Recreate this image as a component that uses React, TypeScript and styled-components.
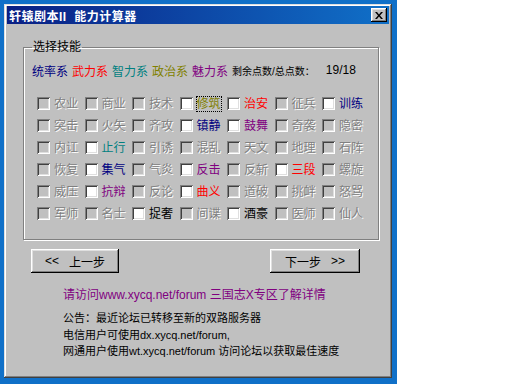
import React from "react";
import styled, { createGlobalStyle } from "styled-components";

const GlobalStyle = createGlobalStyle`
  body {
    margin: 0;
    background: #ffffff;
  }
`;

const FONT = `"Liberation Sans", "Noto Sans CJK SC", sans-serif`;

const Desktop = styled.div`
  width: 397px;
  height: 384px;
  box-sizing: border-box;
  padding: 4px 5px 6px 4px;
  background: #1070c8;
  font-family: ${FONT};
`;

const Window = styled.div`
  height: 100%;
  box-sizing: border-box;
  padding: 2px 3px 3px 3px;
  background: #c0c0c0;
  box-shadow: inset -1px -1px #404040, inset 1px 1px #dfdfdf,
    inset -2px -2px #808080, inset 2px 2px #ffffff;
  display: flex;
  flex-direction: column;
`;

const TitleBar = styled.div`
  height: 18px;
  display: flex;
  align-items: center;
  justify-content: space-between;
  padding: 0 2px;
  background: linear-gradient(to right, #0a1f84, #1070c8);
`;

const Title = styled.span`
  color: #ffffff;
  font-size: 12px;
  font-weight: bold;
  letter-spacing: 0.5px;
  white-space: pre;
`;

const CloseButton = styled.div`
  width: 16px;
  height: 14px;
  box-sizing: border-box;
  background: #c0c0c0;
  box-shadow: inset -1px -1px #000000, inset 1px 1px #ffffff,
    inset -2px -2px #808080, inset 2px 2px #dfdfdf;
  display: flex;
  align-items: center;
  justify-content: center;
`;

const Client = styled.div`
  flex: 1;
  padding: 16px 0 0 16px;
`;

const Group = styled.fieldset`
  width: 350px;
  height: 200px;
  box-sizing: border-box;
  margin: 0;
  padding: 8px 8px 0 8px;
  border: 1px solid #808080;
  box-shadow: inset 1px 1px #ffffff, 1px 1px #ffffff;
`;

const Legend = styled.legend`
  padding: 0 1px;
  font-size: 12px;
  line-height: 14px;
  color: #000000;
`;

const CategoryRow = styled.div`
  display: flex;
  align-items: center;
  gap: 4px;
  height: 16px;
  font-size: 12px;
`;

const Category = styled.span<{ $color: string }>`
  width: 36px;
  color: ${(p) => p.$color};
  white-space: nowrap;
`;

const Points = styled.span`
  font-size: 10px;
  color: #000000;
  white-space: nowrap;
`;

const PointsValue = styled.span`
  margin-left: 7px;
  font-size: 12px;
  color: #000000;
`;

const SkillGrid = styled.div`
  display: grid;
  grid-template-columns: repeat(7, 47.5px);
  grid-auto-rows: 22px;
  margin: 19px 0 0 5px;
`;

const Skill = styled.div`
  display: flex;
  align-items: center;
  gap: 4px;
  height: 13px;
`;

const Box = styled.span<{ $enabled: boolean }>`
  width: 13px;
  height: 13px;
  box-sizing: border-box;
  flex: none;
  background: ${(p) => (p.$enabled ? "#ffffff" : "#c0c0c0")};
  box-shadow: inset 1px 1px #808080, inset -1px -1px #ffffff,
    inset 2px 2px #404040, inset -2px -2px #dfdfdf;
`;

const SkillLabel = styled.span<{ $color?: string; $focus?: boolean }>`
  font-size: 12px;
  line-height: 14px;
  white-space: nowrap;
  color: ${(p) => p.$color ?? "#808080"};
  text-shadow: ${(p) => (p.$color ? "none" : "1px 1px 0 #ffffff")};
  outline: ${(p) => (p.$focus ? "1px dotted #000000" : "none")};
  outline-offset: 0;
`;

const ButtonRow = styled.div`
  display: flex;
  justify-content: space-between;
  margin: 9px 29px 0 8px;
`;

const Button = styled.div<{ $width: number }>`
  width: ${(p) => p.$width}px;
  height: 24px;
  box-sizing: border-box;
  display: flex;
  align-items: center;
  justify-content: center;
  gap: 10px;
  font-size: 12px;
  color: #000000;
  background: #c0c0c0;
  box-shadow: inset -1px -1px #000000, inset 1px 1px #ffffff,
    inset -2px -2px #808080, inset 2px 2px #dfdfdf;
`;

const LinkLine = styled.div`
  margin: 15px 0 0 40px;
  font-size: 12px;
  line-height: 14px;
  color: #800080;
  white-space: nowrap;
`;

const Notice = styled.div`
  margin: 8px 0 0 40px;
  font-size: 11px;
  line-height: 16.5px;
  color: #000000;
  white-space: nowrap;
`;

const NoticeLine = styled.div`
  height: 16.5px;
`;

type SkillItem = { name: string; color?: string; focus?: boolean };

const NAVY = "#000080";
const RED = "#ff0000";
const TEAL = "#008080";
const OLIVE = "#808000";
const PURPLE = "#800080";
const BLACK = "#000000";

const skills: SkillItem[] = [
  { name: "农业" }, { name: "商业" }, { name: "技术" },
  { name: "修筑", color: OLIVE, focus: true }, { name: "治安", color: RED },
  { name: "征兵" }, { name: "训练", color: NAVY },
  { name: "突击" }, { name: "火矢" }, { name: "齐攻" },
  { name: "镇静", color: NAVY }, { name: "鼓舞", color: PURPLE },
  { name: "奇袭" }, { name: "隐密" },
  { name: "内讧" }, { name: "止行", color: TEAL }, { name: "引诱" },
  { name: "混乱" }, { name: "天文" }, { name: "地理" }, { name: "石阵" },
  { name: "恢复" }, { name: "集气", color: NAVY }, { name: "气炎" },
  { name: "反击", color: PURPLE }, { name: "反斩" },
  { name: "三段", color: RED }, { name: "螺旋" },
  { name: "威压" }, { name: "抗辩", color: PURPLE }, { name: "反论" },
  { name: "曲义", color: RED }, { name: "道破" }, { name: "挑衅" },
  { name: "怒骂" },
  { name: "军师" }, { name: "名士" }, { name: "捉奢", color: BLACK },
  { name: "间谍" }, { name: "酒豪", color: BLACK }, { name: "医师" },
  { name: "仙人" },
];

const categories = [
  { name: "统率系", color: NAVY },
  { name: "武力系", color: RED },
  { name: "智力系", color: TEAL },
  { name: "政治系", color: OLIVE },
  { name: "魅力系", color: PURPLE },
];

const notices = [
  "公告：最近论坛已转移至新的双路服务器",
  "电信用户可使用dx.xycq.net/forum,",
  "网通用户使用wt.xycq.net/forum 访问论坛以获取最佳速度",
];

const CloseIcon = () => (
  <svg width="8" height="7" viewBox="0 0 8 7">
    <path d="M0 0h2l2 2.5L6 0h2L5 3.5 8 7H6L4 4.5 2 7H0l3-3.5z" fill="#000" />
  </svg>
);

export default function App() {
  return (
    <>
      <GlobalStyle />
      <Desktop>
        <Window>
          <TitleBar>
            <Title>{"轩辕剧本II  能力计算器"}</Title>
            <CloseButton>
              <CloseIcon />
            </CloseButton>
          </TitleBar>
          <Client>
            <Group>
              <Legend>选择技能</Legend>
              <CategoryRow>
                {categories.map((c) => (
                  <Category key={c.name} $color={c.color}>
                    {c.name}
                  </Category>
                ))}
                <Points>剩余点数/总点数：</Points>
                <PointsValue>19/18</PointsValue>
              </CategoryRow>
              <SkillGrid>
                {skills.map((s) => (
                  <Skill key={s.name}>
                    <Box $enabled={!!s.color} />
                    <SkillLabel $color={s.color} $focus={s.focus}>
                      {s.name}
                    </SkillLabel>
                  </Skill>
                ))}
              </SkillGrid>
            </Group>
            <ButtonRow>
              <Button $width={88}>
                <span>{"<<"}</span>
                <span>上一步</span>
              </Button>
              <Button $width={90}>
                <span>下一步</span>
                <span>{">>"}</span>
              </Button>
            </ButtonRow>
            <LinkLine>请访问www.xycq.net/forum 三国志X专区了解详情</LinkLine>
            <Notice>
              {notices.map((n) => (
                <NoticeLine key={n}>{n}</NoticeLine>
              ))}
            </Notice>
          </Client>
        </Window>
      </Desktop>
    </>
  );
}
